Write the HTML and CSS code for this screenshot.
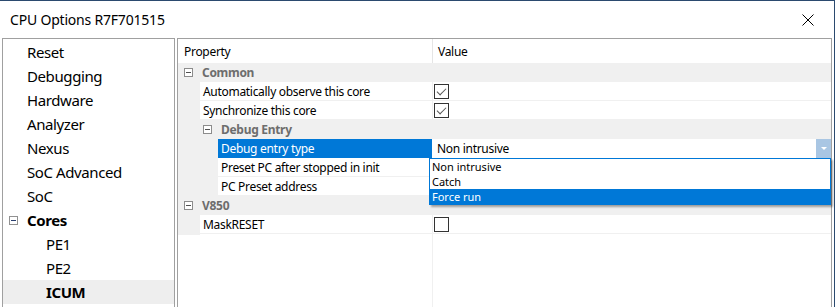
FILE: index.html
```html
<!doctype html>
<html lang="en">
  <head>
    <meta charset="UTF-8" />
    <title>CPU Options R7F701515</title>
    <link rel="stylesheet" href="styles.css">
  </head>
  <body>
    <div class="window">
      <div class="titlebar">
        <span class="title">CPU Options R7F701515</span>
        <svg class="close" viewBox="0 0 12 12" width="12" height="12">
          <path d="M0.5 0.5L11.5 11.5M11.5 0.5L0.5 11.5" stroke="#000" stroke-width="1" fill="none" />
        </svg>
      </div>
      <div class="panes">
        <div class="tree">
          <div class="node">Reset</div>
          <div class="node">Debugging</div>
          <div class="node">Hardware</div>
          <div class="node">Analyzer</div>
          <div class="node">Nexus</div>
          <div class="node">SoC Advanced</div>
          <div class="node">SoC</div>
          <div class="node group"><span class="tree-toggle"></span>Cores</div>
          <div class="node child">PE1</div>
          <div class="node child">PE2</div>
          <div class="node child group selected">ICUM</div>
        </div>

        <div class="grid">
          <div class="grid-head">
            <div class="name-col">Property</div>
            <div class="value-col">Value</div>
          </div>

          <div class="cat"><span class="grid-toggle"></span>Common</div>
          <div class="row">
            <div class="name"><span class="indent l1"></span><span class="label">Automatically observe this core</span></div>
            <div class="value"><span class="check on"></span></div>
          </div>
          <div class="row">
            <div class="name"><span class="indent l1"></span><span class="label">Synchronize this core</span></div>
            <div class="value"><span class="check on"></span></div>
          </div>
          <div class="cat sub"><span class="grid-toggle"></span>Debug Entry</div>
          <div class="row">
            <div class="name"><span class="indent l2"></span><span class="label active">Debug entry type</span></div>
            <div class="value combo">
              <span class="combo-text">Non intrusive</span>
              <span class="combo-btn"></span>
            </div>
          </div>
          <div class="row">
            <div class="name"><span class="indent l2"></span><span class="label">Preset PC after stopped in init</span></div>
            <div class="value"></div>
          </div>
          <div class="row">
            <div class="name"><span class="indent l2"></span><span class="label">PC Preset address</span></div>
            <div class="value"></div>
          </div>
          <div class="cat"><span class="grid-toggle"></span>V850</div>
          <div class="row">
            <div class="name"><span class="indent l1"></span><span class="label">MaskRESET</span></div>
            <div class="value"><span class="check"></span></div>
          </div>
          <div class="filler">
            <div class="name-col"></div>
            <div class="value-col"></div>
          </div>

          <div class="dropdown">
            <div class="option">Non intrusive</div>
            <div class="option">Catch</div>
            <div class="option picked">Force run</div>
          </div>
        </div>
      </div>
    </div>
  </body>
</html>
```

FILE: styles.css
```css
* {
  margin: 0;
  padding: 0;
  box-sizing: border-box;
}

body {
  font-family: 'Segoe UI', 'Noto Sans', sans-serif;
  background: #ffffff;
  color: #000000;
}

.window {
  width: 835px;
  height: 307px;
  background: #ffffff;
  border-top: 1px solid #2b4a6f;
  border-right: 1px solid #2b4a6f;
  overflow: hidden;
}

.titlebar {
  height: 37px;
  display: flex;
  align-items: center;
  justify-content: space-between;
  padding: 0 20px 0 10px;
}

.title {
  font-size: 14px;
  letter-spacing: -0.2px;
}

.close {
  display: block;
}

.panes {
  display: flex;
  gap: 2px;
  padding-left: 2px;
  height: 290px;
}

/* left tree */
.tree {
  width: 173px;
  border: 1px solid #a0a0a0;
  padding-top: 1px;
}

.node {
  height: 24px;
  line-height: 24px;
  font-size: 15px;
  letter-spacing: -0.4px;
  padding-left: 24px;
  position: relative;
}

.node.child {
  padding-left: 43px;
}

.node.group {
  font-weight: bold;
}

.node.selected {
  background: #eeeeee;
}

.tree-toggle {
  position: absolute;
  left: 6px;
  top: 8px;
  width: 9px;
  height: 9px;
  border: 1px solid #919191;
}

.tree-toggle::after {
  content: '';
  position: absolute;
  left: 1px;
  top: 3px;
  width: 5px;
  height: 1px;
  background: #2a3f6f;
}

/* property grid */
.grid {
  width: 655px;
  border: 1px solid #a0a0a0;
  position: relative;
  display: flex;
  flex-direction: column;
  font-size: 12px;
  letter-spacing: -0.3px;
}

.grid-head {
  height: 24px;
  display: grid;
  grid-template-columns: 255px 1fr;
  line-height: 25px;
}

.grid-head .name-col {
  padding-left: 6px;
  border-right: 1px solid #e5e5e5;
}

.grid-head .value-col {
  padding-left: 5px;
}

.cat {
  height: 19px;
  line-height: 19px;
  background: #f0f0f0;
  color: #6d6d6d;
  font-weight: bold;
  padding-left: 24px;
  position: relative;
}

.cat.sub {
  padding-left: 43px;
}

.grid-toggle {
  position: absolute;
  left: 6px;
  top: 5px;
  width: 9px;
  height: 9px;
  border: 1px solid #8c8c8c;
  background: #ffffff;
}

.cat.sub .grid-toggle {
  left: 25px;
}

.grid-toggle::after {
  content: '';
  position: absolute;
  left: 1px;
  top: 3px;
  width: 5px;
  height: 1px;
  background: #505050;
}

.row {
  height: 19px;
  display: grid;
  grid-template-columns: 255px 1fr;
  border-bottom: 1px solid #f0f0f0;
}

.name {
  display: flex;
  border-right: 1px solid #f0f0f0;
  line-height: 19px;
  min-width: 0;
}

.indent {
  background: #f0f0f0;
  flex: none;
  margin-bottom: -1px;
}

.indent.l1 {
  width: 22px;
}

.indent.l2 {
  width: 40px;
}

.label {
  flex: 1;
  padding-left: 3px;
  white-space: nowrap;
}

.label.active {
  background: #0078d7;
  color: #ffffff;
}

.value {
  position: relative;
}

.check {
  position: absolute;
  left: 1px;
  top: 2px;
  width: 15px;
  height: 15px;
  border: 1px solid #333333;
  background: #ffffff;
}

.check.on::after {
  content: '';
  position: absolute;
  left: 2px;
  top: 1px;
  width: 8px;
  height: 4px;
  border-left: 1px solid #555555;
  border-bottom: 1px solid #555555;
  transform: translate(0, 2px) rotate(-45deg);
}

.combo {
  display: flex;
  background: #ffffff;
  line-height: 19px;
  margin-left: -1px;
}

.combo-text {
  flex: 1;
  padding-left: 5px;
}

.combo-btn {
  width: 15px;
  background: #a9c6e3;
  position: relative;
}

.combo-btn::after {
  content: '';
  position: absolute;
  left: 5px;
  top: 8px;
  border-left: 3px solid transparent;
  border-right: 3px solid transparent;
  border-top: 3px solid #ffffff;
}

.filler {
  flex: 1;
  display: grid;
  grid-template-columns: 255px 1fr;
}

.filler .name-col {
  border-right: 1px solid #f0f0f0;
}

/* open combo list */
.dropdown {
  position: absolute;
  left: 251px;
  top: 119px;
  width: 402px;
  height: 47px;
  border: 1px solid #0078d7;
  background: #ffffff;
  box-shadow: 2px 2px 2px rgba(0, 0, 0, 0.35);
}

.option {
  height: 15px;
  line-height: 15px;
  font-size: 11px;
  letter-spacing: 0;
  padding-left: 2px;
}

.option.picked {
  background: #0078d7;
  color: #ffffff;
}
```
